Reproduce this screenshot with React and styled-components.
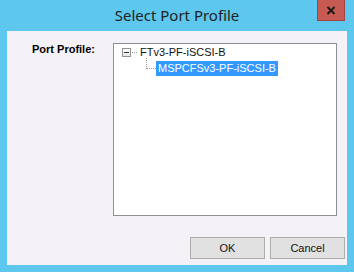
import React from 'react'
import styled, { createGlobalStyle } from 'styled-components'

const GlobalStyle = createGlobalStyle`
  html, body {
    margin: 0;
    padding: 0;
    background: #5dc7ee;
  }
`;

const Window = styled.div`
  width: 354px;
  height: 272px;
  box-sizing: border-box;
  background: #5dc7ee;
  padding: 0 7px 7px 7px;
  display: flex;
  flex-direction: column;
  font-family: "Liberation Sans", Arial, sans-serif;
`;

const TitleBar = styled.div`
  height: 31px;
  flex: none;
  display: grid;
  grid-template-columns: 1fr auto 1fr;
  align-items: start;
`;

const Title = styled.div`
  grid-column: 2;
  font-family: "Noto Sans", "Open Sans", sans-serif;
  font-size: 15px;
  color: #222;
  line-height: 30px;
`;

const CloseButton = styled.div`
  grid-column: 3;
  justify-self: end;
  margin-right: 2px;
  width: 28px;
  height: 21px;
  box-sizing: border-box;
  background: #c75a52;
  border: 1px solid #a24440;
  border-top: none;
  display: flex;
  align-items: center;
  justify-content: center;
  svg {
    display: block;
  }
`;

const Panel = styled.div`
  flex: 1;
  background: #f4f2f6;
  display: flex;
  flex-direction: column;
  padding: 12px 2px 0 25px;
`;

const FieldRow = styled.div`
  display: flex;
  align-items: flex-start;
`;

const Label = styled.div`
  width: 81px;
  flex: none;
  font-size: 11px;
  font-weight: bold;
  color: #000;
  line-height: 12px;
`;

const TreeBox = styled.div`
  flex: 1;
  margin-right: 8px;
  height: 173px;
  box-sizing: border-box;
  background: #fff;
  border: 1px solid #8e8f94;
`;

const TreeRow = styled.div`
  height: 16px;
  display: flex;
  align-items: center;
  padding-left: ${p => p.$indent}px;
  font-size: 11px;
  color: #111;
`;

const Expander = styled.span`
  width: 9px;
  height: 9px;
  box-sizing: border-box;
  border: 1px solid #929292;
  background: linear-gradient(#fff, #e6e6e6);
  display: flex;
  align-items: center;
  justify-content: center;
  &::after {
    content: '';
    width: 5px;
    height: 1px;
    background: #333;
  }
`;

const HDots = styled.span`
  width: ${p => p.$w}px;
  border-top: 1px dotted #999;
  margin: 0 1px;
`;

const Elbow = styled.span`
  width: 10px;
  height: 11px;
  box-sizing: border-box;
  align-self: flex-start;
  margin-top: -2px;
  border-left: 1px dotted #999;
  border-bottom: 1px dotted #999;
`;

const NodeText = styled.span`
  padding: 0 2px;
  line-height: 15px;
  background: ${p => (p.$selected ? '#3399ff' : 'transparent')};
  color: ${p => (p.$selected ? '#fff' : '#111')};
`;

const ButtonRow = styled.div`
  display: flex;
  justify-content: flex-end;
  gap: 5px;
  margin-top: 21px;
`;

const Button = styled.div`
  width: 75px;
  height: 22px;
  box-sizing: border-box;
  background: #e1e1e1;
  border: 1px solid #adadad;
  display: flex;
  align-items: center;
  justify-content: center;
  font-size: 11px;
  color: #111;
`;

const App = () => {
  return (
    <>
      <GlobalStyle />
      <Window>
        <TitleBar>
          <Title>Select Port Profile</Title>
          <CloseButton>
            <svg width="10" height="9" viewBox="0 0 10 9">
              <path d="M1.5 1 L8.5 8 M8.5 1 L1.5 8" stroke="#1a1a1a" strokeWidth="2" />
            </svg>
          </CloseButton>
        </TitleBar>
        <Panel>
          <FieldRow>
            <Label>Port Profile:</Label>
            <TreeBox>
              <TreeRow $indent={8}>
                <Expander />
                <HDots $w={5} />
                <NodeText>FTv3-PF-iSCSI-B</NodeText>
              </TreeRow>
              <TreeRow $indent={32}>
                <Elbow />
                <NodeText $selected>MSPCFSv3-PF-iSCSI-B</NodeText>
              </TreeRow>
            </TreeBox>
          </FieldRow>
          <ButtonRow>
            <Button>OK</Button>
            <Button>Cancel</Button>
          </ButtonRow>
        </Panel>
      </Window>
    </>
  )
}

export default App;
